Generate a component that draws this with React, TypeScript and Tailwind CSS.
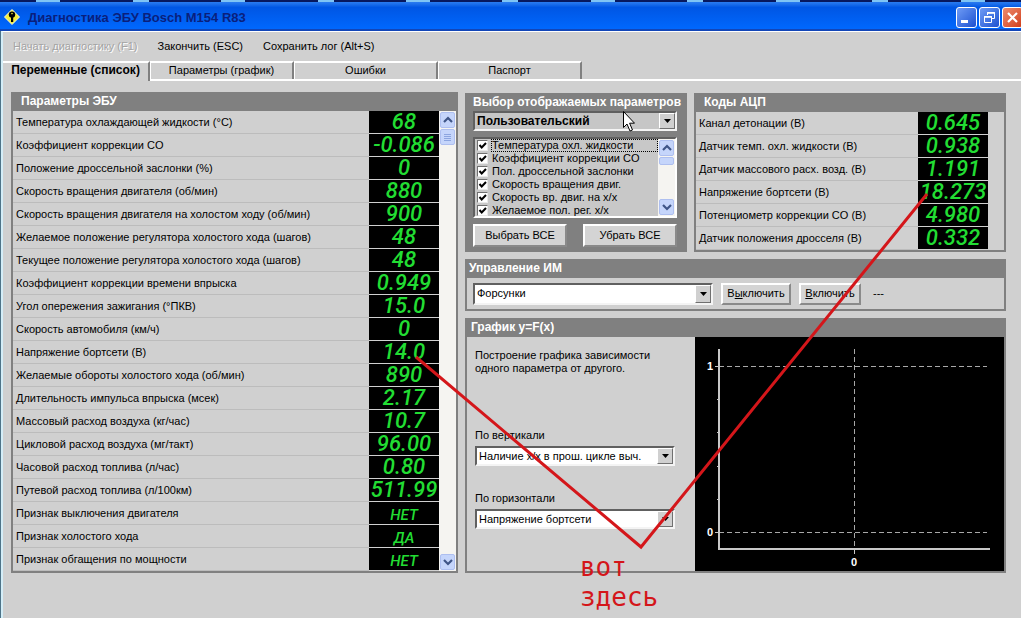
import { useState, type ReactNode } from "react";
import clsx from "clsx";

interface Reading {
  label: string;
  value: string;
}

const ecuParams: Reading[] = [
  { label: "Температура охлаждающей жидкости (°C)", value: "68" },
  { label: "Коэффициент коррекции CO", value: "-0.086" },
  { label: "Положение дроссельной заслонки (%)", value: "0" },
  { label: "Скорость вращения двигателя (об/мин)", value: "880" },
  { label: "Скорость вращения двигателя на холостом ходу (об/мин)", value: "900" },
  { label: "Желаемое положение регулятора холостого хода (шагов)", value: "48" },
  { label: "Текущее положение регулятора холостого хода (шагов)", value: "48" },
  { label: "Коэффициент коррекции времени впрыска", value: "0.949" },
  { label: "Угол опережения зажигания (°ПКВ)", value: "15.0" },
  { label: "Скорость автомобиля (км/ч)", value: "0" },
  { label: "Напряжение бортсети (В)", value: "14.0" },
  { label: "Желаемые обороты холостого хода (об/мин)", value: "890" },
  { label: "Длительность импульса впрыска (мсек)", value: "2.17" },
  { label: "Массовый расход воздуха (кг/час)", value: "10.7" },
  { label: "Цикловой расход воздуха (мг/такт)", value: "96.00" },
  { label: "Часовой расход топлива (л/час)", value: "0.80" },
  { label: "Путевой расход топлива (л/100км)", value: "511.99" },
  { label: "Признак выключения двигателя", value: "НЕТ" },
  { label: "Признак холостого хода", value: "ДА" },
  { label: "Признак обгащения по мощности", value: "НЕТ" },
];

const adcCodes: Reading[] = [
  { label: "Канал детонации (В)", value: "0.645" },
  { label: "Датчик темп. охл. жидкости (В)", value: "0.938" },
  { label: "Датчик массового расх. возд. (В)", value: "1.191" },
  { label: "Напряжение бортсети (В)", value: "18.273" },
  { label: "Потенциометр коррекции CO (В)", value: "4.980" },
  { label: "Датчик положения дросселя (В)", value: "0.332" },
];

const shownParams = [
  "Температура охл. жидкости",
  "Коэффициент коррекции CO",
  "Пол. дроссельной заслонки",
  "Скорость вращения двиг.",
  "Скорость вр. двиг. на х/х",
  "Желаемое пол. рег. х/х",
];

const tabs = ["Переменные (список)", "Параметры (график)", "Ошибки", "Паспорт"];

function Panel({ title, className, children }: { title: string; className?: string; children: ReactNode }) {
  return (
    <section className="min-w-0 border-2 border-t-0 border-[#808080]">
      <h2 className={clsx("h-[19px] bg-[#808080] text-[12px] leading-[18px] font-bold text-white", className)}>
        {title}
      </h2>
      {children}
    </section>
  );
}

function ReadingsTable({ rows }: { rows: Reading[] }) {
  return (
    <table className="w-full border-separate border-spacing-0">
      <tbody>
        {rows.map((row) => (
          <tr key={row.label}>
            <th
              scope="row"
              className="h-[23px] border-b border-[#bcbcbc] p-0 pl-[3px] text-left font-normal whitespace-nowrap"
            >
              {row.label}
            </th>
            <td
              className={clsx(
                "h-[23px] w-[70px] border-b border-[#d0d0d0] bg-black p-0 text-center font-['Roboto','Liberation_Sans',sans-serif] font-medium text-[#22dd33] italic",
                /^[А-Я]/.test(row.value) ? "pt-1 text-[15px] leading-[18px]" : "text-[22px] leading-[22px]"
              )}
            >
              {row.value}
            </td>
          </tr>
        ))}
      </tbody>
    </table>
  );
}

function ScrollButton({ down }: { down?: boolean }) {
  return (
    <button
      type="button"
      aria-label={down ? "Вниз" : "Вверх"}
      className="flex h-4 w-full items-center justify-center rounded-xs border border-[#aebff0] bg-[#c5d5fb]"
    >
      <svg viewBox="0 0 10 8" className={clsx("h-2 w-[10px]", down && "rotate-180")}>
        <path d="M1 6 L5 2 L9 6" fill="none" stroke="#3f5587" strokeWidth="2.2" />
      </svg>
    </button>
  );
}

function ScrollBar({ short }: { short?: boolean }) {
  return (
    <div className="flex w-[17px] flex-none flex-col bg-[#f5f4f1] p-px">
      <ScrollButton />
      <div
        className={clsx(
          "mt-px flex flex-col items-center justify-center gap-px rounded-xs border border-[#aebff0] bg-[#c5d5fb]",
          short ? "h-2" : "h-4"
        )}
      >
        {!short && [0, 1, 2, 3].map((i) => <span key={i} className="h-px w-[7px] bg-[#8ca5e0]" />)}
      </div>
      <div className="flex-1" />
      <ScrollButton down />
    </div>
  );
}

interface ComboProps {
  label: string;
  id: string;
  value: string;
  className?: string;
  selectClass?: string;
}

function Combo({ label, id, value, className, selectClass }: ComboProps) {
  return (
    <div
      className={clsx(
        "relative border-2 border-t-[#606060] border-r-[#f4f4f4] border-b-[#f4f4f4] border-l-[#606060]",
        className
      )}
    >
      <select
        id={id}
        aria-label={label}
        className={clsx("block h-full w-full appearance-none pr-5 pl-[2px] outline-none", selectClass ?? "bg-white")}
      >
        <option>{value}</option>
      </select>
      <span className="pointer-events-none absolute inset-y-0 right-0 flex w-4 items-center justify-center border border-t-white border-r-[#707070] border-b-[#707070] border-l-white bg-[#d0d0d0]">
        <svg viewBox="0 0 7 4" className="h-1 w-[7px]">
          <path d="M0 0 H7 L3.5 4 Z" fill="#000" />
        </svg>
      </span>
    </div>
  );
}

function PushButton({ className, children }: { className?: string; children: ReactNode }) {
  return (
    <button
      type="button"
      className={clsx(
        "border-2 border-t-white border-r-[#8a8a8a] border-b-[#8a8a8a] border-l-white bg-[#d4d4d4] text-center",
        className
      )}
    >
      {children}
    </button>
  );
}

function TitleBar() {
  const frame = "flex h-[21px] w-[21px] items-center justify-center rounded-[3px] border border-white";
  return (
    <header>
      <div className="flex h-[2px] justify-around bg-[#07185e]">
        {[0, 1, 2, 3, 4, 5, 6, 7, 8, 9, 10].map((i) => (
          <span key={i} className={clsx("h-[2px] bg-[#7fc4f4]", i % 2 ? "w-4" : "w-6")} />
        ))}
      </div>
      <div className="flex h-[29px] items-center overflow-hidden border-b-2 border-[#1246b8] bg-linear-to-b from-[#2a7cf0] via-[#0056e4] via-20% to-[#0068fe] pt-[3px] pl-1">
        <svg viewBox="0 0 16 16" className="h-4 w-4">
          <path d="M8 0.5 L15.5 8 L8 15.5 L0.5 8 Z" fill="#f4ee3c" stroke="#fffbd0" />
          <circle cx="8" cy="5.6" r="3.2" fill="#000" />
          <path d="M7 7 H9.2 V13 H7 Z" fill="#000" />
          <circle cx="8" cy="4.6" r="0.8" fill="#f4ee3c" />
        </svg>
        <h1 className="ml-2 flex-1 text-[13px] font-bold text-[#0a1f7c]">Диагностика ЭБУ Bosch M154 R83</h1>
        <div className="-mr-[2px] flex gap-[2px]">
          <button type="button" aria-label="Свернуть" className={clsx(frame, "bg-linear-to-br from-[#6f9bf5] to-[#1d4fd0]")}>
            <svg viewBox="0 0 19 19" className="h-[19px] w-[19px]">
              <path d="M4 12 H11 V15 H4 Z" fill="#fff" />
            </svg>
          </button>
          <button type="button" aria-label="Восстановить" className={clsx(frame, "bg-linear-to-br from-[#6f9bf5] to-[#1d4fd0]")}>
            <svg viewBox="0 0 19 19" className="h-[19px] w-[19px]" fill="none" stroke="#fff">
              <path d="M7.5 7 V4.5 H14.5 V10.5 H12" />
              <path d="M7 5 H15" strokeWidth="1.6" />
              <path d="M4.5 8.5 H11.5 V14.5 H4.5 Z" />
              <path d="M4 9 H12" strokeWidth="1.6" />
            </svg>
          </button>
          <button type="button" aria-label="Закрыть" className={clsx(frame, "bg-linear-to-br from-[#ee8a6c] to-[#cf3a12]")}>
            <svg viewBox="0 0 19 19" className="h-[19px] w-[19px]">
              <path d="M5 5 L14 14 M14 5 L5 14" stroke="#fff" strokeWidth="2.2" />
            </svg>
          </button>
        </div>
      </div>
    </header>
  );
}

function ParamPicker() {
  const [checked, setChecked] = useState(shownParams.map(() => true));
  const toggle = (index: number) => setChecked(checked.map((c, i) => (i === index ? !c : c)));

  return (
    <section className="relative min-w-0 bg-[#808080] pr-[10px] pb-[5px] pl-2">
      <h2 className="h-[18px] text-[12px] leading-[18px] font-bold whitespace-nowrap text-white">
        Выбор отображаемых параметров
      </h2>
      <Combo
        id="preset"
        label="Набор параметров"
        value="Пользовательский"
        className="h-5"
        selectClass="bg-[#c6c6c6] text-[12px] font-bold"
      />
      <div className="mt-[6px] flex h-[81px] border-2 border-t-[#606060] border-r-white border-b-white border-l-[#606060] bg-[#c8c8c8]">
        <ul className="min-w-0 flex-1 overflow-hidden">
          {shownParams.map((name, i) => (
            <li key={name}>
              <label className="flex h-[13px] items-center gap-[3px] pl-[2px] leading-[13px] whitespace-nowrap">
                <span className="relative h-[11px] w-[11px] flex-none">
                  <input
                    type="checkbox"
                    checked={checked[i]}
                    onChange={() => toggle(i)}
                    className="block h-[11px] w-[11px] appearance-none border border-t-[#707070] border-r-[#e8e8e8] border-b-[#e8e8e8] border-l-[#707070] bg-white"
                  />
                  {checked[i] && (
                    <svg viewBox="0 0 11 11" className="pointer-events-none absolute inset-0">
                      <path d="M2.5 5 L4.7 7.5 L9 3" fill="none" stroke="#000" strokeWidth="2" />
                    </svg>
                  )}
                </span>
                <span className={clsx("flex-1 pl-px", i === 0 && "outline-1 -outline-offset-1 outline-dotted outline-black")}>
                  {name}
                </span>
              </label>
            </li>
          ))}
        </ul>
        <ScrollBar short />
      </div>
      <div className="mt-[6px] grid grid-cols-2 gap-4">
        <PushButton className="h-[23px]">Выбрать ВСЕ</PushButton>
        <PushButton className="h-[23px]">Убрать ВСЕ</PushButton>
      </div>
      <svg viewBox="0 0 12 21" className="pointer-events-none absolute top-[18px] left-[158px] h-[21px] w-3">
        <path d="M0.5 0.5 V16.5 L4 13 L7 20 L9.5 19 L6.6 12.2 H11.5 Z" fill="#fff" stroke="#000" />
      </svg>
    </section>
  );
}

function Plot() {
  return (
    <svg viewBox="0 0 309 234" className="h-[234px] w-full bg-black" preserveAspectRatio="xMinYMin meet">
      <g stroke="#a8a8a8" strokeDasharray="5 3">
        <path d="M24 29.5 H292" />
        <path d="M24 195.5 H292" />
        <path d="M159.5 12 V212" />
      </g>
      <path d="M24 12 V212 H295" fill="none" stroke="#c8c8c8" strokeWidth="2" />
      <path d="M20 29.5 H25 M20 195.5 H25 M22 62.5 H24 M22 95.5 H24 M22 129.5 H24 M22 162.5 H24 M159.5 212 V217" stroke="#c8c8c8" />
      <g fill="#fff" fontSize="11" fontWeight="bold" textAnchor="middle">
        <text x="15" y="33">1</text>
        <text x="15" y="199">0</text>
        <text x="159" y="229">0</text>
      </g>
    </svg>
  );
}

export default function App() {
  const [active, setActive] = useState(0);

  return (
    <div className="relative flex min-h-screen flex-col bg-[#d0d0d0] font-['Liberation_Sans',Arial,sans-serif] text-[11px] leading-[13px] text-black">
      <TitleBar />
      <div className="flex flex-1 flex-col border-l border-[#4f7488]">
        <div className="flex-1 border-t border-l-2 border-t-white border-l-[#d4eef8]">
          {/* Menu */}
          <nav className="flex h-[29px] items-center gap-5 pl-[10px]">
            <button type="button" disabled className="text-[#a4a4a4] [text-shadow:1px_1px_0_#fff]">
              Начать диагностику (F1)
            </button>
            <button type="button">Закончить (ESC)</button>
            <button type="button">Сохранить лог (Alt+S)</button>
          </nav>

          {/* Tabs */}
          <div role="tablist" className="flex h-5 items-end border-b-2 border-white">
            {tabs.map((tab, i) => (
              <button
                key={tab}
                type="button"
                role="tab"
                aria-selected={i === active}
                onClick={() => setActive(i)}
                className={clsx(
                  "border-t-2 border-r-2 border-t-white border-r-[#808080]",
                  i === active
                    ? "-mb-[2px] h-5 w-[147px] bg-[#d0d0d0] pb-1 text-[12px] font-bold"
                    : "h-[18px] w-[144px] border-l border-l-white pb-px"
                )}
              >
                {tab}
              </button>
            ))}
          </div>

          <main className="grid grid-cols-[447fr_541fr] items-end gap-[7px] pt-[11px] pr-[15px] pb-6 pl-2">
            <Panel title="Параметры ЭБУ" className="pl-2">
              <div className="flex">
                <ReadingsTable rows={ecuParams} />
                <ScrollBar />
              </div>
            </Panel>

            <div className="flex min-w-0 flex-col gap-[7px]">
              <div className="grid grid-cols-[222fr_312fr] gap-[7px]">
                <ParamPicker />
                <Panel title="Коды АЦП" className="pl-2">
                  <div className="pr-4">
                    <ReadingsTable rows={adcCodes} />
                  </div>
                </Panel>
              </div>

              <Panel title="Управление ИМ" className="pl-[2px]">
                <div className="flex h-[31px] items-center gap-2 pl-[6px]">
                  <Combo id="actuator" label="Исполнительный механизм" value="Форсунки" className="h-[22px] w-[240px]" />
                  <PushButton className="h-[22px] w-[70px]">
                    В<u>ы</u>ключить
                  </PushButton>
                  <PushButton className="h-[22px] w-[62px]">
                    <u>В</u>ключить
                  </PushButton>
                  <span className="pl-1">---</span>
                </div>
              </Panel>

              <Panel title="График y=F(x)" className="pl-1">
                <div className="grid grid-cols-[228fr_309fr]">
                  <div className="pt-3 pr-5 pl-2">
                    <p className="whitespace-nowrap">
                      Построение графика зависимости
                      <br />
                      одного параметра от другого.
                    </p>
                    <label htmlFor="axis-y" className="mt-[54px] block">
                      По вертикали
                    </label>
                    <Combo id="axis-y" label="По вертикали" value="Наличие х/х в прош. цикле выч." className="mt-1 h-5" />
                    <label htmlFor="axis-x" className="mt-[26px] block">
                      По горизонтали
                    </label>
                    <Combo id="axis-x" label="По горизонтали" value="Напряжение бортсети" className="mt-1 h-5" />
                  </div>
                  <Plot />
                </div>
              </Panel>
            </div>
          </main>
        </div>
      </div>

      {/* Markup drawn over the window */}
      <svg
        viewBox="0 0 1021 618"
        preserveAspectRatio="none"
        className="pointer-events-none absolute top-0 left-0 h-[618px] w-full"
      >
        <path d="M416 357 L641 547 L927 194" fill="none" stroke="#d4161a" strokeWidth="3" />
      </svg>
      <p className="pointer-events-none absolute top-[552px] left-[57%] -ml-[2px] font-['DejaVu_Sans_Mono',monospace] text-[26px] leading-[30px] text-[#d4161a]">
        вот
        <br />
        здесь
      </p>
    </div>
  );
}
